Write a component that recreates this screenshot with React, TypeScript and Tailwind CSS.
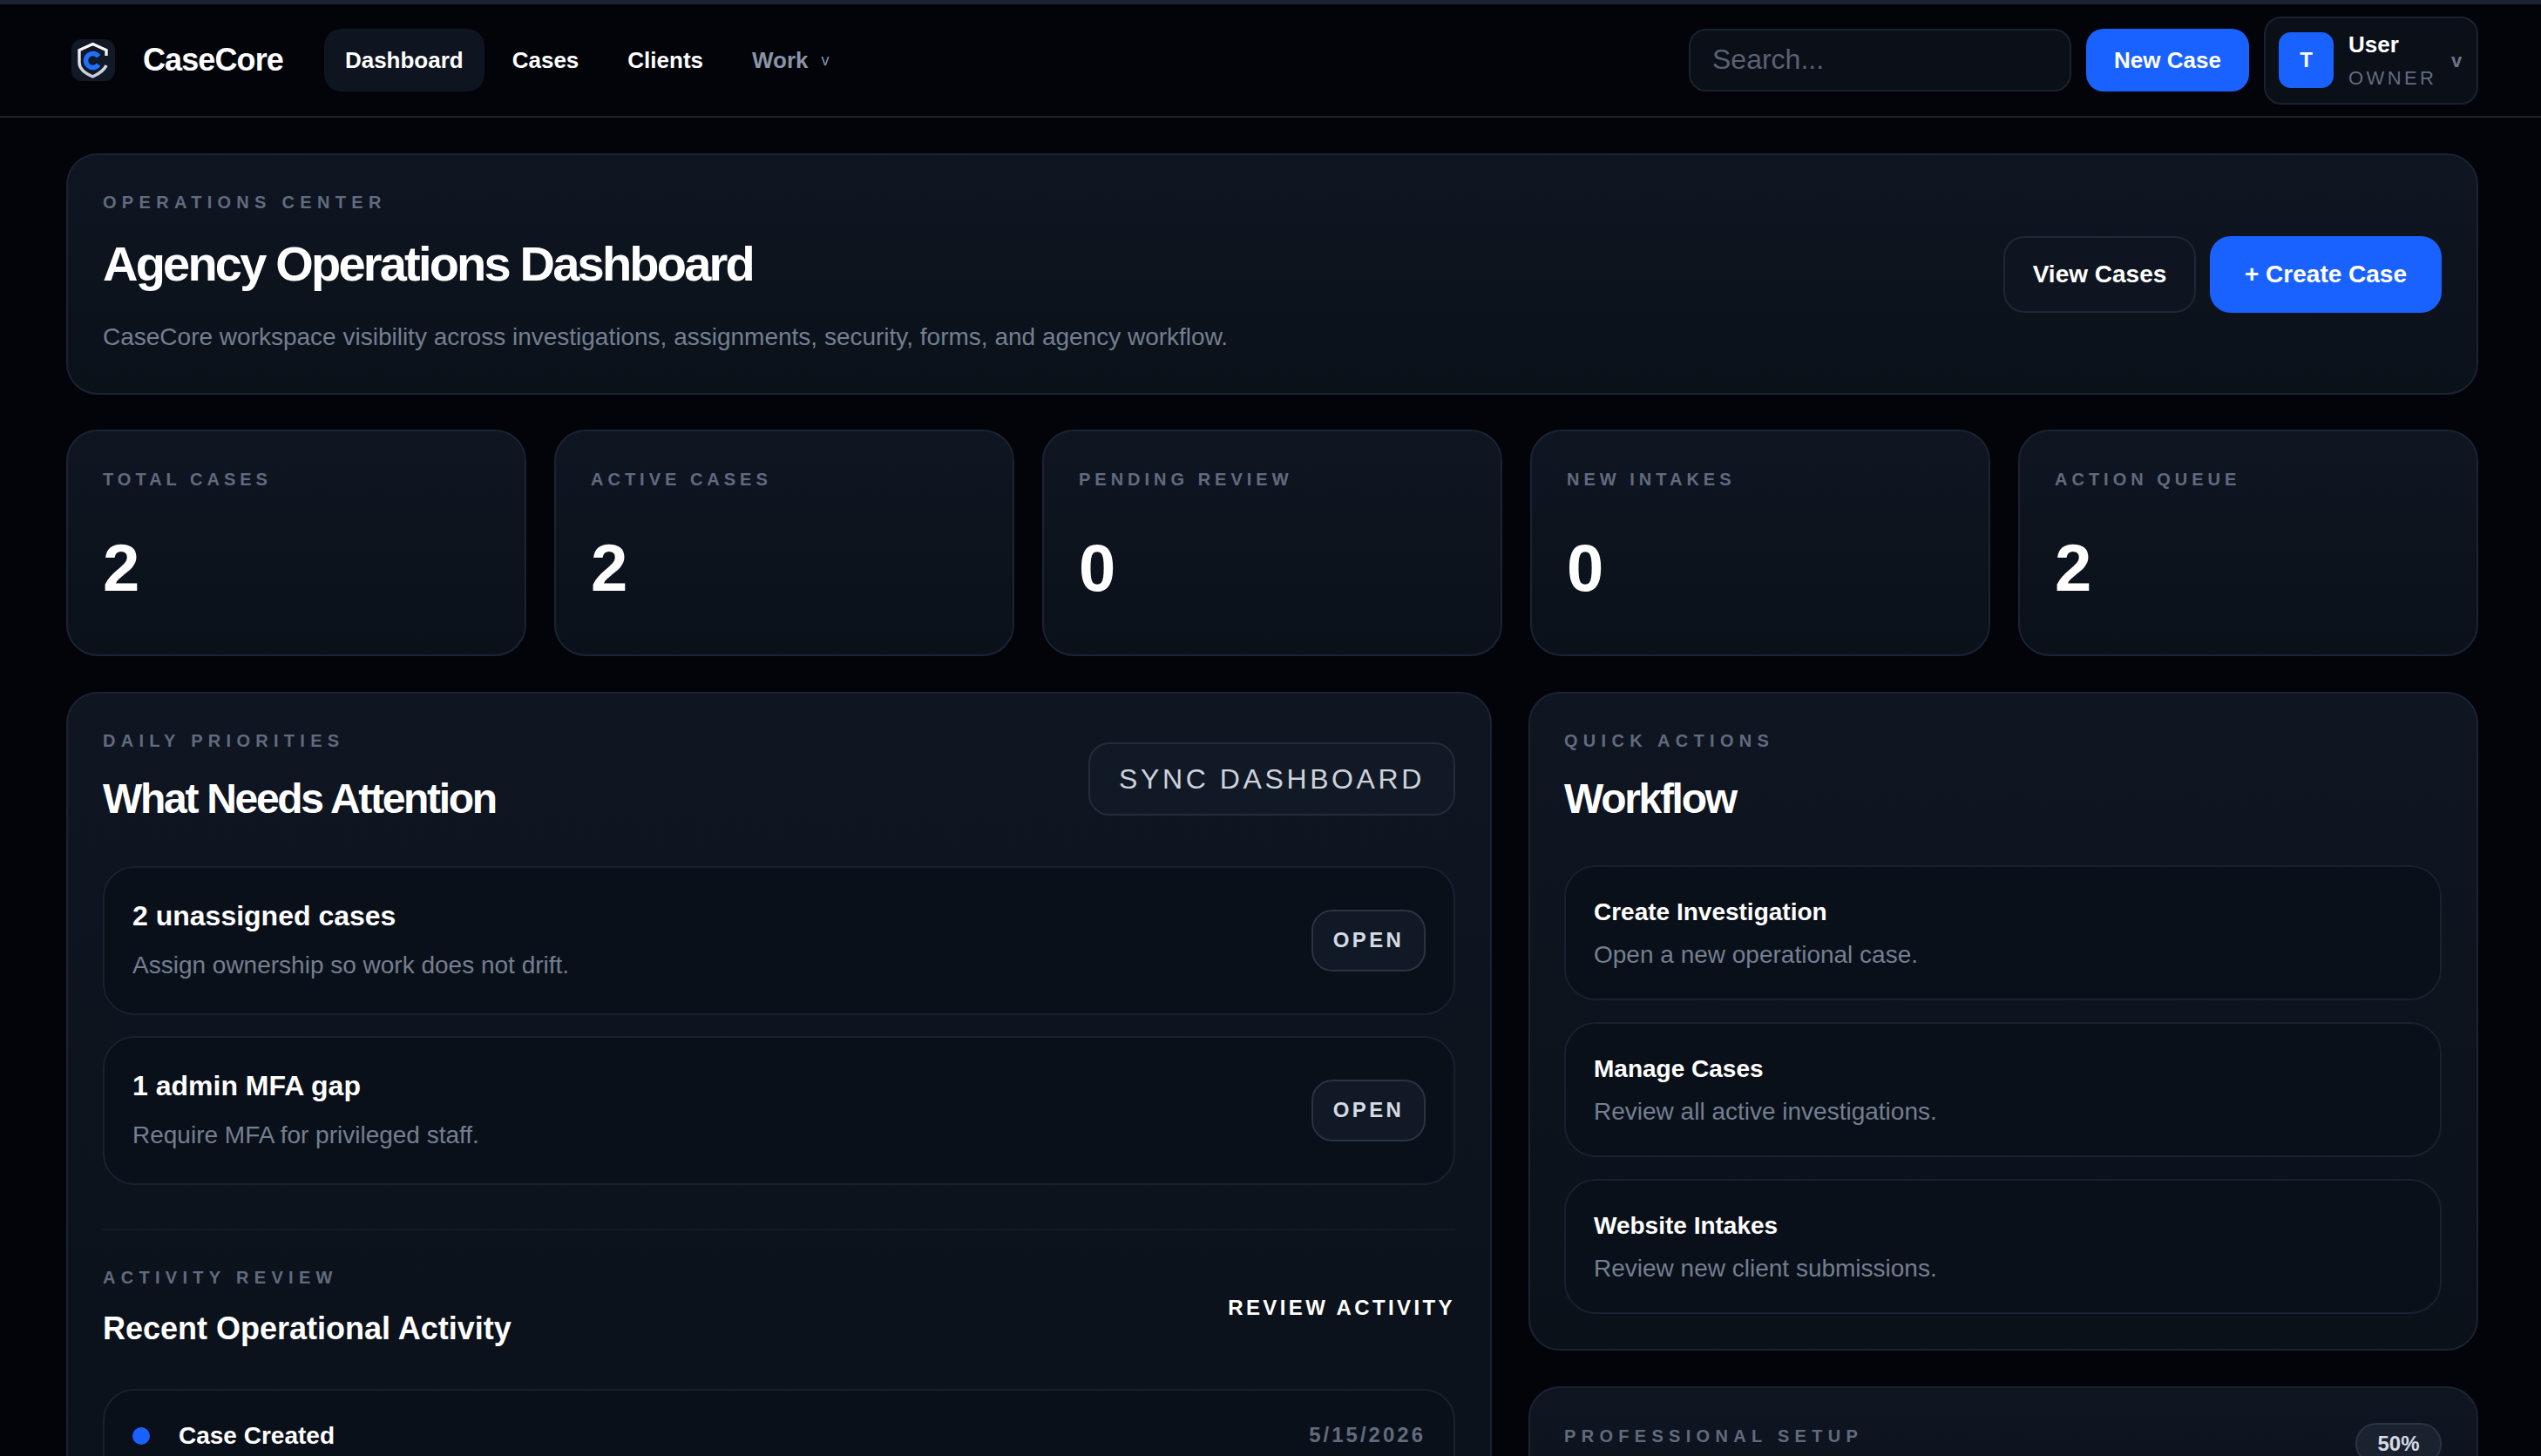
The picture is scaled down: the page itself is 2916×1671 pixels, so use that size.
import React from 'react';

const Logo = () => (
  <svg width="50" height="48" viewBox="0 0 50 48" className="shrink-0">
    <defs>
      <linearGradient id="shieldStroke" x1="0" y1="0" x2="0" y2="1">
        <stop offset="0" stopColor="#ffffff" />
        <stop offset="1" stopColor="#c4cad3" />
      </linearGradient>
    </defs>
    <rect width="50" height="48" rx="12" fill="#111826" />
    <path
      d="M40 19 V12.5 L24.5 5.5 L9 12.5 V27 C9 33 15 39 24.5 43 C33 39 38 35 40 30"
      fill="none"
      stroke="url(#shieldStroke)"
      strokeWidth="3.4"
    />
    <path
      d="M31.1 19.9 A8 8 0 1 0 31.1 29.1"
      fill="none"
      stroke="#2070ff"
      strokeWidth="5.4"
    />
  </svg>
);

const Eyebrow = ({ children }: { children: React.ReactNode }) => (
  <div className="text-[20px] leading-[24px] font-bold tracking-[6.3px] text-[#616b7e]">{children}</div>
);

const stats = [
  { label: 'TOTAL CASES', value: '2' },
  { label: 'ACTIVE CASES', value: '2' },
  { label: 'PENDING REVIEW', value: '0' },
  { label: 'NEW INTAKES', value: '0' },
  { label: 'ACTION QUEUE', value: '2' },
];

const attention = [
  { title: '2 unassigned cases', text: 'Assign ownership so work does not drift.' },
  { title: '1 admin MFA gap', text: 'Require MFA for privileged staff.' },
];

const workflow = [
  { title: 'Create Investigation', text: 'Open a new operational case.' },
  { title: 'Manage Cases', text: 'Review all active investigations.' },
  { title: 'Website Intakes', text: 'Review new client submissions.' },
];

const cardClass =
  'rounded-[36px] border-2 border-[#1a2333] bg-gradient-to-b from-[#0f1622] to-[#0a1119]';

export default function App() {
  return (
    <div className="h-screen overflow-hidden bg-[#02040a] text-white font-['Liberation_Sans',Arial,sans-serif]">
      <div className="h-[5px] bg-[#1b2333]" />
      <header className="flex h-[130px] items-center justify-between border-b-2 border-[#1a2230] pl-[82px] pr-[72px]">
        <div className="flex items-center">
          <Logo />
          <div className="ml-[32px] text-[36px] font-bold tracking-[-0.9px]">CaseCore</div>
          <nav className="ml-[47px] flex items-center gap-[8px] text-[26px] font-bold">
            <a className="flex h-[72px] items-center rounded-[20px] bg-[#0f1520] px-[24px]">Dashboard</a>
            <a className="flex h-[72px] items-center px-[24px]">Cases</a>
            <a className="flex h-[72px] items-center px-[24px]">Clients</a>
            <a className="flex h-[72px] items-center gap-[15px] px-[24px] text-[#8a94a8]">
              Work <span className="text-[18px] font-normal">v</span>
            </a>
          </nav>
        </div>
        <div className="flex items-center gap-[17px]">
          <div className="flex h-[72px] w-[439px] items-center rounded-[20px] border-2 border-[#1a2230] bg-[#0a0f18] px-[25px] pb-[2px] text-[32px] text-[#5a6272]">
            Search...
          </div>
          <button className="h-[72px] w-[187px] rounded-[20px] bg-[#1a62ff] text-[26px] font-bold">New Case</button>
          <div className="flex h-[101px] w-[246px] items-center rounded-[20px] border-2 border-[#1a2230] bg-[#0a0f18] pl-[15px]">
            <div className="flex h-[64px] w-[63px] items-center justify-center rounded-[14px] bg-[#1a62ff] text-[24px] font-bold">T</div>
            <div className="ml-[17px] w-[118px]">
              <div className="text-[26px] leading-[32px] font-bold">User</div>
              <div className="mt-[9px] text-[22px] leading-[28px] tracking-[3.4px] text-[#626d80]">OWNER</div>
            </div>
            <span className="text-[22px] font-bold text-[#6b7689]">v</span>
          </div>
        </div>
      </header>

      <main className="pl-[76px] pr-[72px] pt-[41px]">
        <section className={`flex h-[277px] items-center justify-between px-[40px] ${cardClass}`}>
          <div className="pb-[3px]">
            <Eyebrow>OPERATIONS CENTER</Eyebrow>
            <h1 className="mt-[25px] text-[56px] leading-[68px] font-bold tracking-[-2.8px]">Agency Operations Dashboard</h1>
            <p className="mt-[31px] text-[28px] leading-[38px] text-[#747f91]">
              CaseCore workspace visibility across investigations, assignments, security, forms, and agency workflow.
            </p>
          </div>
          <div className="flex gap-[16px]">
            <button className="h-[88px] w-[221px] rounded-[24px] border-2 border-[#1e2735] bg-[#0f1520] text-[28px] font-bold">View Cases</button>
            <button className="h-[88px] w-[266px] rounded-[24px] bg-[#1a62ff] text-[28px] font-bold">+ Create Case</button>
          </div>
        </section>

        <section className="mt-[40px] grid grid-cols-5 gap-[32px]">
          {stats.map((s) => (
            <div key={s.label} className={`h-[260px] pl-[40px] pt-[43px] ${cardClass}`}>
              <div className="text-[20px] leading-[24px] font-bold tracking-[5px] text-[#616b7e]">{s.label}</div>
              <div className="mt-[44px] text-[76px] leading-[92px] font-bold">{s.value}</div>
            </div>
          ))}
        </section>

        <section className="mt-[41px] flex items-start gap-[42px]">
          <div className={`w-[1636px] shrink-0 px-[40px] pt-[42px] ${cardClass}`}>
            <div className="flex items-start justify-between">
              <div>
                <Eyebrow>DAILY PRIORITIES</Eyebrow>
                <h2 className="mt-[26px] text-[48px] leading-[58px] font-bold tracking-[-2.3px]">What Needs Attention</h2>
              </div>
              <button className="mt-[14px] h-[84px] w-[421px] rounded-[24px] border-2 border-[#232c3a] bg-[#121926] text-[32px] tracking-[3.6px] text-[#cdd2db]">
                SYNC DASHBOARD
              </button>
            </div>

            <div className="mt-[48px] flex flex-col gap-[24px]">
              {attention.map((a) => (
                <div key={a.title} className="flex h-[171px] items-center justify-between rounded-[36px] border-2 border-[#182130] bg-[#0a1019] pl-[32px] pr-[32px]">
                  <div>
                    <div className="text-[32px] leading-[38px] font-bold">{a.title}</div>
                    <div className="mt-[19px] text-[28px] leading-[38px] text-[#747f91]">{a.text}</div>
                  </div>
                  <button className="mb-[1px] h-[71px] w-[131px] rounded-[24px] border-2 border-[#2a3342] bg-[#121926] text-[24px] font-bold tracking-[3.4px] text-[#d5dae3]">
                    OPEN
                  </button>
                </div>
              ))}
            </div>

            <div className="mt-[50px] border-t-2 border-[#141b28] pt-[42px]">
              <div className="flex items-center justify-between">
                <div>
                  <Eyebrow>ACTIVITY REVIEW</Eyebrow>
                  <h3 className="mt-[25px] text-[36px] leading-[44px] font-bold">Recent Operational Activity</h3>
                </div>
                <span className="text-[24px] font-bold tracking-[3.4px]">REVIEW ACTIVITY</span>
              </div>
              <div className="mt-[47px] flex h-[171px] items-start justify-between rounded-[36px] border-2 border-[#182130] bg-[#0a1019] pl-[32px] pr-[32px] pt-[34px]">
                <div className="flex items-center">
                  <span className="h-[20px] w-[20px] rounded-full bg-[#1a62ff]" />
                  <span className="ml-[33px] text-[28px] leading-[36px] font-bold">Case Created</span>
                </div>
                <span className="text-[24px] leading-[34px] font-bold tracking-[3px] text-[#616b7e]">5/15/2026</span>
              </div>
            </div>
          </div>

          <div className="flex min-w-0 flex-1 flex-col gap-[41px]">
            <div className={`h-[756px] pl-[39px] pr-[40px] pt-[42px] ${cardClass}`}>
              <Eyebrow>QUICK ACTIONS</Eyebrow>
              <h2 className="mt-[26px] text-[48px] leading-[58px] font-bold tracking-[-2.3px]">Workflow</h2>
              <div className="mt-[47px] flex flex-col gap-[25px]">
                {workflow.map((w) => (
                  <div key={w.title} className="h-[155px] rounded-[36px] border-2 border-[#182130] bg-[#0a1019] pl-[32px] pt-[34px]">
                    <div className="text-[28px] leading-[36px] font-bold">{w.title}</div>
                    <div className="mt-[13px] text-[28px] leading-[36px] text-[#747f91]">{w.text}</div>
                  </div>
                ))}
              </div>
            </div>
            <div className={`h-[200px] pl-[39px] pr-[40px] pt-[40px] ${cardClass}`}>
              <div className="flex items-start justify-between">
                <div className="mt-[3px]">
                  <Eyebrow>PROFESSIONAL SETUP</Eyebrow>
                </div>
                <span className="flex h-[48px] w-[99px] items-center justify-center rounded-full border-2 border-[#2a3342] bg-[#1a2230] text-[24px] font-bold text-[#d5dae3]">
                  50%
                </span>
              </div>
            </div>
          </div>
        </section>
      </main>
    </div>
  );
}
